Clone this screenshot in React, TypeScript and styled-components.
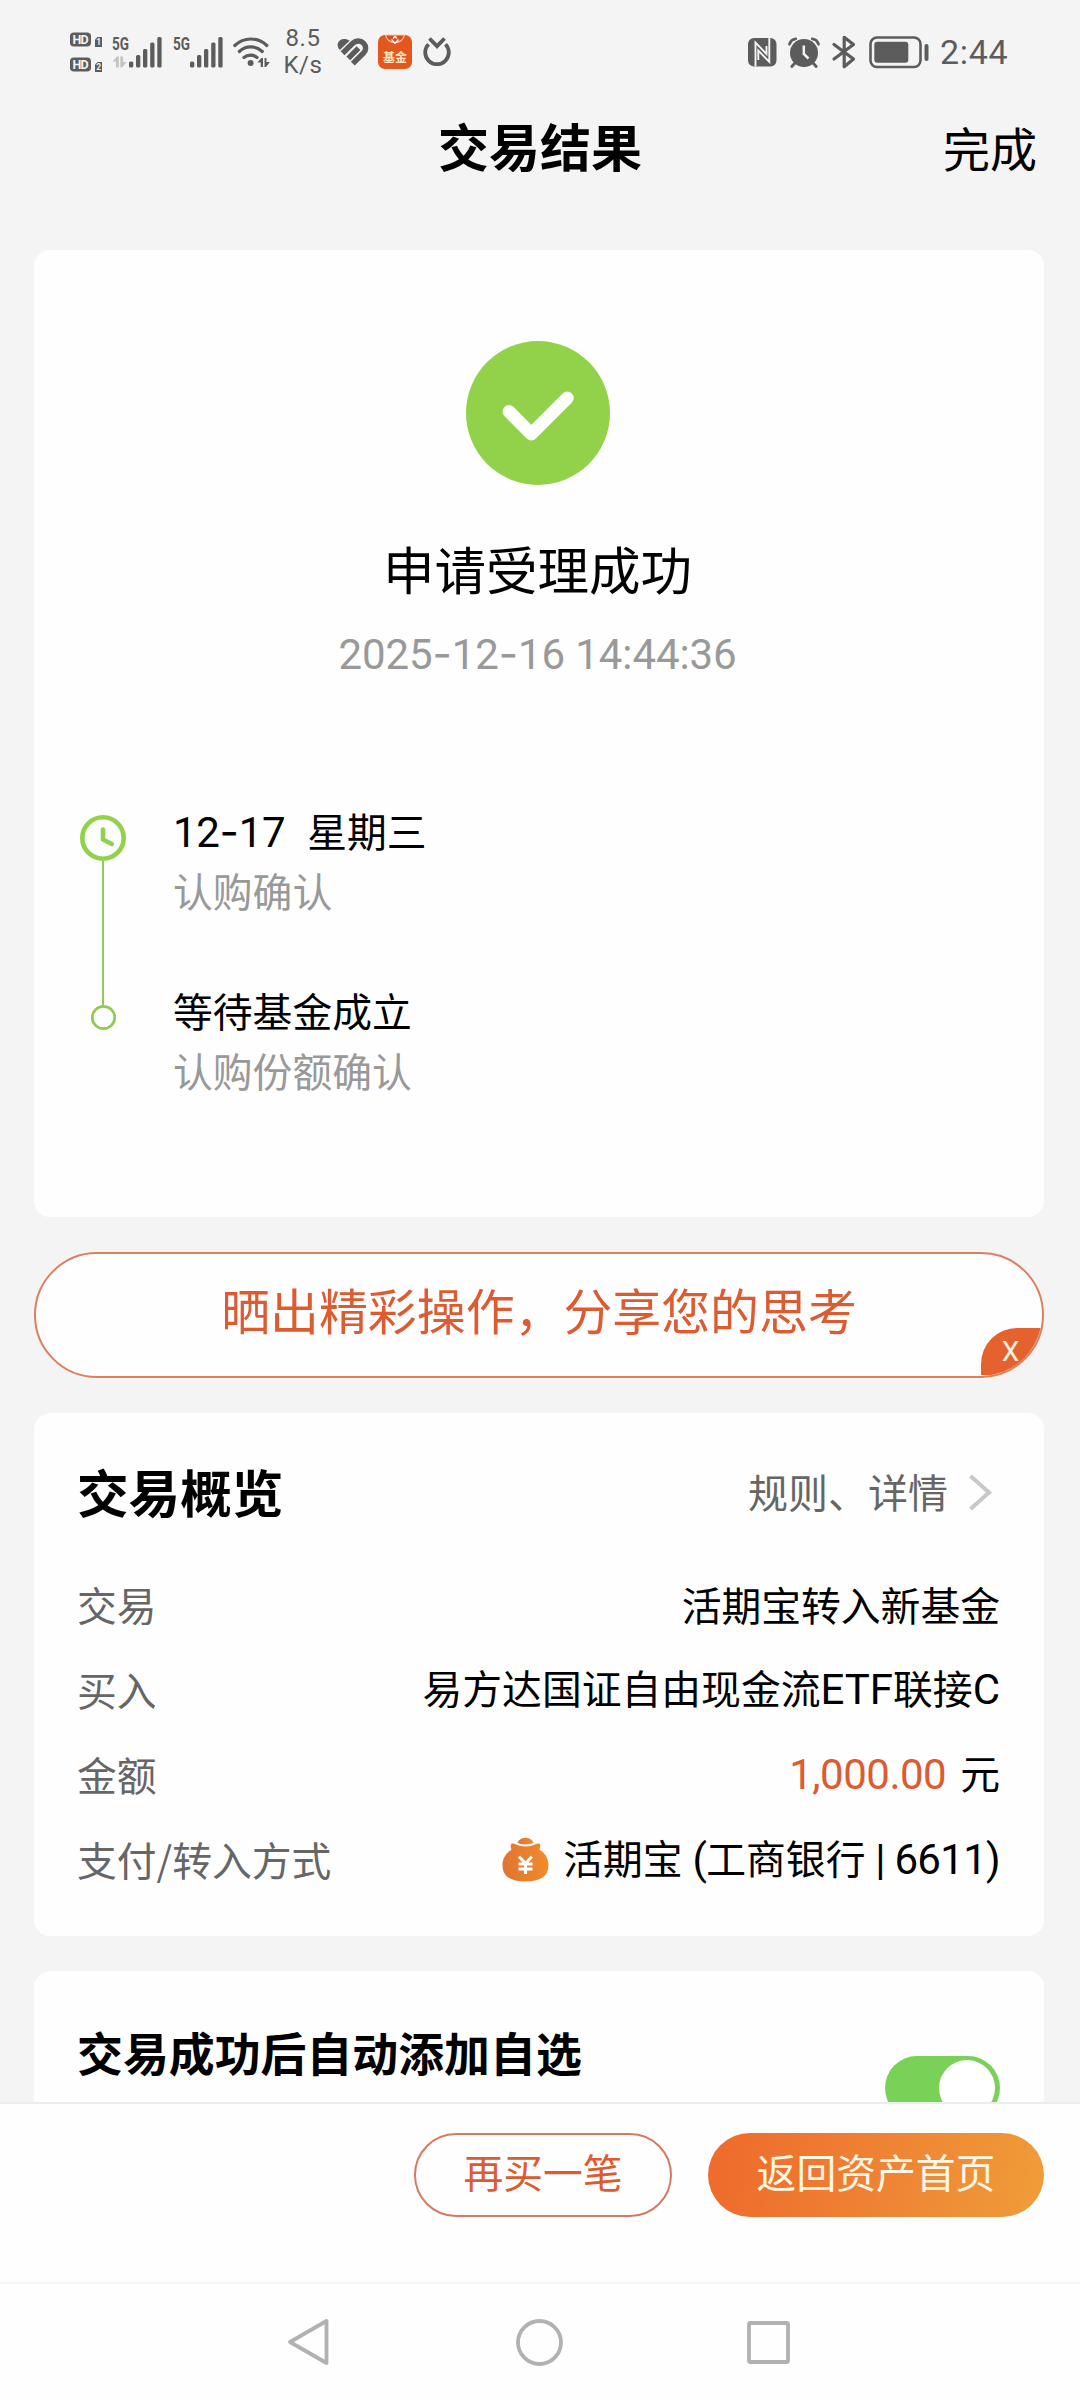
import React from "react";
import styled, { createGlobalStyle } from "styled-components";

const cjk = '"Noto Sans CJK SC", "Noto Sans", sans-serif';
const orange = "#dc5b30";
const inkGray = "#5c5c5c";

const GlobalStyle = createGlobalStyle`
  * { box-sizing: border-box; }
  html, body { margin: 0; padding: 0; background: #f4f4f4; }
  svg { display: block; flex: none; overflow: visible; }
`;

const Screen = styled.div`
  width: 1080px;
  height: 2400px;
  display: flex;
  flex-direction: column;
  overflow: hidden;
  background: #f4f4f4;
  color: #000;
  font-family: ${cjk};
`;

const StatusBar = styled.div`
  height: 104px;
  flex: none;
  display: flex;
  align-items: center;
  justify-content: space-between;
  padding: 0 71px 0 70px;
  color: ${inkGray};
`;

const StatusGroup = styled.div`
  display: flex;
  align-items: center;
`;

const StatusItem = styled.div<{ $before?: number }>`
  margin-left: ${(p) => p.$before ?? 0}px;
`;

const NetSpeed = styled.div`
  width: 36px;
  margin-left: 15px;
  display: flex;
  flex-direction: column;
  align-items: center;
  font: 24px/27px Roboto, sans-serif;
  letter-spacing: 0.6px;
`;

const Clock = styled.div`
  width: 69px;
  margin-left: 10px;
  font: 34px/40px Roboto, sans-serif;
  letter-spacing: 0.7px;
`;

const Header = styled.header`
  height: 92px;
  flex: none;
  display: grid;
  grid-template-columns: 1fr auto 1fr;
  align-items: center;
  padding: 0 43px;
`;

const PageTitle = styled.h1`
  grid-column: 2;
  margin: 0;
  font-size: 51px;
  font-weight: 700;
  line-height: 60px;
  padding-bottom: 10px;
`;

const DoneButton = styled.button`
  justify-self: end;
  padding: 0 0 6px;
  border: 0;
  background: none;
  color: #000;
  font: 47px/60px ${cjk};
`;

const Content = styled.main`
  flex: 1;
  min-height: 0;
  overflow: hidden;
  display: flex;
  flex-direction: column;
  padding: 54px 36px 0 34px;
`;

const Card = styled.section<{ $height: number; $top?: number }>`
  flex: none;
  height: ${(p) => p.$height}px;
  margin-top: ${(p) => p.$top ?? 0}px;
  background: #fefefe;
  border-radius: 16px;
`;

const ResultHead = styled.div`
  display: flex;
  flex-direction: column;
  align-items: center;
  padding-top: 91px;
  padding-right: 3px;
`;

const ResultTitle = styled.div`
  margin-top: 50px;
  font-size: 51.5px;
  line-height: 66px;
`;

const ResultTime = styled.div`
  margin-top: 28px;
  color: #999;
  font: 42px/50px Roboto, sans-serif;
  letter-spacing: -0.1px;
  white-space: pre;
`;

const Dash = styled.span`
  font-family: Inter, sans-serif;
`;

const Latin = styled.span<{ $size?: number; $spacing?: number }>`
  font-family: Roboto, sans-serif;
  font-size: ${(p) => p.$size ?? 42}px;
  letter-spacing: ${(p) => p.$spacing ?? 0}px;
`;

const Timeline = styled.div`
  display: flex;
  padding: 120px 0 0 45px;
`;

const Rail = styled.div`
  width: 48px;
  display: flex;
  flex-direction: column;
  align-items: center;
  padding-top: 15px;
`;

const RailLine = styled.div`
  width: 2px;
  height: 144px;
  background: #93c860;
`;

const Steps = styled.div`
  display: flex;
  flex-direction: column;
  gap: 60px;
  margin-left: 46px;
`;

const Step = styled.div`
  font-size: 39.8px;
  line-height: 60px;
`;

const StepDate = styled.div`
  height: 60px;
  white-space: pre;
`;

const Weekday = styled.span`
  margin-left: 22px;
`;

const StepNote = styled.div`
  color: #999;
`;

const SharePill = styled.div`
  position: relative;
  flex: none;
  height: 126px;
  margin-top: 35.5px;
  border: 2px solid #db7f5d;
  border-radius: 63px;
  background: #fefefe;
  overflow: hidden;
  display: flex;
  justify-content: center;
  align-items: center;
  padding-bottom: 12px;
  color: ${orange};
  font-size: 48.9px;
  line-height: 60px;
`;

const CloseCorner = styled.button`
  position: absolute;
  right: 0;
  bottom: 1px;
  width: 61px;
  height: 47px;
  border: 0;
  border-radius: 36px 0 0 0;
  background: #e5622e;
  color: #fff3e6;
  padding: 0 2px 0 0;
  font: 28px/46px Roboto, sans-serif;
`;

const OverviewHead = styled.div`
  display: flex;
  justify-content: space-between;
  align-items: center;
  height: 64px;
  margin-top: 46px;
  margin-bottom: 1px;
  padding: 0 51px 0 43px;
`;

const SectionTitle = styled.h2<{ $size: number }>`
  margin: 0;
  font-size: ${(p) => p.$size}px;
  font-weight: 700;
  line-height: 60px;
`;

const DetailLink = styled.div`
  display: flex;
  align-items: center;
  gap: 20px;
  padding-top: 1px;
  color: #666;
  font-size: 40px;
  line-height: 60px;
`;

const Rows = styled.div`
  display: flex;
  flex-direction: column;
  padding: 37px 44px 0 43px;
`;

const Row = styled.div`
  display: flex;
  justify-content: space-between;
  height: 85px;
  font-size: 39.8px;
  line-height: 85px;
  white-space: pre;
`;

const RowLabel = styled.div`
  color: #666;
`;

const RowValue = styled.div`
  display: flex;
  align-items: center;
`;

const Amount = styled(Latin)`
  color: ${orange};
  margin-right: 14px;
`;

const BagSlot = styled.span`
  margin: 3px 14px 0 0;
`;

const WatchRow = styled.div`
  display: flex;
  justify-content: space-between;
  align-items: flex-start;
  padding: 50px 44px 0 43px;
`;

const Toggle = styled.div`
  width: 115px;
  height: 64px;
  margin-top: 35px;
  padding: 4px 5px;
  border-radius: 32px;
  background: #79d257;
  display: flex;
  justify-content: flex-end;
`;

const Knob = styled.div`
  width: 56px;
  height: 56px;
  border-radius: 50%;
  background: #fff;
`;

const ActionBar = styled.footer`
  flex: none;
  height: 180px;
  border-top: 2px solid #ececec;
  background: #fefefe;
  display: flex;
  justify-content: flex-end;
  align-items: flex-start;
  gap: 36px;
  padding: 29px 36px 0 0;
`;

const Action = styled.button<{ $primary?: boolean }>`
  width: ${(p) => (p.$primary ? 336 : 258)}px;
  height: 84px;
  padding: 0 0 9px;
  border: ${(p) => (p.$primary ? "0" : "2px solid #d67a5d")};
  border-radius: 42px;
  background: ${(p) =>
    p.$primary ? "linear-gradient(100deg, #ee6c2c 5%, #ee8535 55%, #f09a38 95%)" : "#fefefe"};
  color: ${(p) => (p.$primary ? "#fff6e4" : orange)};
  font: 39.8px/60px ${cjk};
`;

const NavBar = styled.nav`
  flex: none;
  height: 118px;
  border-top: 2px solid #f5f5f5;
  background: #fefefe;
  display: flex;
  align-items: center;
  padding-left: 286px;
`;

const NavKey = styled.div<{ $before?: number }>`
  margin-left: ${(p) => p.$before ?? 0}px;
`;

const HdIcon = () => (
  <svg width="33" height="40" viewBox="0 0 33 40" fill={inkGray}>
    {[0, 25].map((y, i) => (
      <g key={y} transform={`translate(0 ${y})`}>
        <rect x="0" y="0.5" width="21" height="14" rx="4" />
        <text x="10.5" y="12" fontSize="12.5" fontWeight="700" fontFamily="Roboto" fill="#f4f4f4" textAnchor="middle" textLength="16">
          HD
        </text>
        <path d="M27.500 5H32v10h-7V7.500z" />
        <text x="28.600" y="13.300" fontSize="8.500" fontWeight="700" fontFamily="Roboto" fill="#f4f4f4" textAnchor="middle">
          {i + 1}
        </text>
      </g>
    ))}
  </svg>
);

const SignalIcon = ({ data }: { data?: boolean }) => (
  <svg width="50" height="32" viewBox="0 0 50 32" fill={inkGray}>
    <text x="0" y="14" fontSize="18" fontWeight="700" fontFamily="Roboto" textLength="17" lengthAdjust="spacingAndGlyphs">
      5G
    </text>
    {data && (
      <path fill="#c4c4c4" d="M0.500 25.500l4.500-5h1.800v11h-2.800v-6zM8.300 20.500h2.800v5.500h3.500l-4.500 5.500H8.300z" />
    )}
    <rect x="17" y="25.500" width="4.300" height="6" rx="1.500" />
    <rect x="24" y="19" width="4.300" height="12.500" rx="1.500" />
    <rect x="31" y="13" width="4.300" height="18.500" rx="1.500" />
    <rect x="38.200" y="6.500" width="4.300" height="25" rx="1.500" />
    <rect x="45.300" y="1" width="4.300" height="30.500" rx="1.500" />
  </svg>
);

const WifiIcon = () => (
  <svg width="37" height="32" viewBox="0 0 37 32" fill="none" stroke={inkGray} strokeWidth="3.200" strokeLinecap="round">
    <path d="M1.800 9.500a23 23 0 0 1 32 0M6.300 15.500a16.500 16.500 0 0 1 23 0M11 21.500a10 10 0 0 1 13 0" />
    <circle cx="17.600" cy="27" r="3" fill={inkGray} stroke="none" />
    <path fill={inkGray} stroke="none" d="M24.500 26.500l3.800-4.500h1.700v9h-2.300v-4.500zM31.500 22h2v4h3.500l-4 5h-1.500z" />
  </svg>
);

const HealthIcon = () => (
  <svg width="32" height="28" viewBox="0 0 32 28" fill="none" stroke={inkGray} strokeWidth="5.400">
    <path fill={inkGray} stroke="none" d="M2.800 12C-1.500 7.500.8 1.300 7 1c2.300 0 4 .6 5.600 1.700z" />
    <path d="M5.600 15.200L15.500 5.500C19 2.100 23.600 2.200 26.500 5.200c3 3.200 2.800 7.100-.2 10L15.800 25.600M11.300 20.300L21.500 10.200" />
  </svg>
);

const FundAppIcon = () => (
  <svg width="34" height="34" viewBox="0 0 34 34">
    <rect width="34" height="34" rx="7" fill="#e4571f" />
    <path d="M7.500 0a9.700 9.700 0 0 0 19 0z" fill="#d94c1f" stroke="#f6c9a4" strokeWidth="1.200" />
    <path d="M13.500 4.500l3.500 3.700 3.500-3.700M15 3.500l2-2 2 2" fill="none" stroke="#fff" strokeWidth="1.300" />
    <text x="17" y="27" fontSize="12" fontWeight="700" fontFamily="Noto Sans CJK SC" fill="#ffe9c4" textAnchor="middle">
      基金
    </text>
  </svg>
);

const TailIcon = () => (
  <svg width="28" height="30" viewBox="0 0 28 30" fill="none" stroke={inkGray} strokeWidth="3.800">
    <path d="M5.500 7.200A11.800 11.800 0 1 0 22.500 7.200" />
    <path d="M6.500 1.500L14 9.200l7.500-7.700" />
  </svg>
);

const NfcIcon = () => (
  <svg width="29" height="29" viewBox="0 0 29 29">
    <rect width="28.500" height="28.500" rx="6" fill={inkGray} />
    <path d="M7.500 28.500V4.500L18.500 16V8M21.300 0v24L10.300 12.500V22" fill="none" stroke="#f4f4f4" strokeWidth="1.900" />
  </svg>
);

const AlarmIcon = () => (
  <svg width="32" height="31" viewBox="0 0 32 31" fill="none" stroke={inkGray} strokeLinecap="round">
    <circle cx="16" cy="16" r="14" fill={inkGray} stroke="none" />
    <path d="M1.500 7.200c.8-3 3-5 6.200-5.400M30.500 7.200c-.8-3-3-5-6.200-5.400" strokeWidth="2.800" />
    <path d="M6.500 26.500l-2.700 3M25.500 26.500l2.700 3" strokeWidth="2.800" />
    <path d="M15.800 8.500v8.500l4.700 4.500" stroke="#f4f4f4" strokeWidth="2.500" strokeLinecap="butt" />
  </svg>
);

const BluetoothIcon = () => (
  <svg width="24" height="34" viewBox="0 0 24 34" fill="none" stroke={inkGray} strokeWidth="3.200" strokeLinejoin="round" strokeLinecap="round">
    <path d="M2 9.500L21.500 24l-9.300 7.700V2.300L21.500 9.500 2 24" />
  </svg>
);

const BatteryIcon = () => (
  <svg width="61" height="33" viewBox="0 0 61 33">
    <rect x="1.500" y="1.500" width="50" height="29.500" rx="6.500" fill="none" stroke={inkGray} strokeWidth="2.600" />
    <rect x="5.300" y="5.700" width="34" height="21" rx="3" fill={inkGray} />
    <rect x="55.500" y="8" width="4" height="17" rx="2" fill={inkGray} />
  </svg>
);

const SuccessIcon = () => (
  <svg width="144" height="144" viewBox="0 0 144 144">
    <circle cx="72" cy="72" r="72" fill="#92d24a" />
    <path d="M43 70.500l22.300 22.500 36-36" fill="none" stroke="#fefefe" strokeWidth="13" strokeLinecap="round" strokeLinejoin="round" />
  </svg>
);

const ClockIcon = () => (
  <svg width="46" height="46" viewBox="0 0 46 46" fill="none" stroke="#92d24a" strokeWidth="4.600">
    <circle cx="23" cy="23" r="20.700" />
    <path d="M23 14.500v10l8.800 4.500" strokeLinecap="round" strokeLinejoin="round" />
  </svg>
);

const DotIcon = () => (
  <svg width="25" height="25" viewBox="0 0 25 25">
    <circle cx="12.500" cy="12.500" r="11.200" fill="none" stroke="#8ecb4e" strokeWidth="2.700" />
  </svg>
);

const ChevronIcon = () => (
  <svg width="25" height="38" viewBox="0 0 25 38">
    <path d="M2.500 4l18.500 16.500-18.500 16.500" fill="none" stroke="#c8c8c8" strokeWidth="4" />
  </svg>
);

const BagIcon = () => (
  <svg width="47" height="46" viewBox="0 0 47 46">
    <defs>
      <linearGradient id="bag" x1="0" x2="1">
        <stop offset="0" stopColor="#e07433" />
        <stop offset="1" stopColor="#f08c2a" />
      </linearGradient>
    </defs>
    <path d="M15.500 5.800C17 2.300 20 .8 23.500.8S30 2.300 31.500 5.800c-4 2.300-12 2.300-16 0z" fill="url(#bag)" />
    <path
      d="M9.500 6.800c1.500-.6 3 0 4.500.7 6 2.500 13 2.500 19 0 1.500-.7 3-1.300 4.500-.7 1.500 1.500.7 4 0 6C43 16 46.500 21.500 46.500 28c0 11.500-8 16.500-23 16.500S.500 39.500.500 28C.500 21.500 4 16 9.500 12.800c-.7-2-1.500-4.500 0-6z"
      fill="url(#bag)"
    />
    <path d="M17 19.500l6.500 7 6.500-7M16.500 27h14M16.500 32h14M23.500 26.500v10.500" fill="none" stroke="#fff" strokeWidth="3" />
  </svg>
);

const BackIcon = () => (
  <svg width="43" height="48" viewBox="0 0 43 48">
    <path d="M40.500 3v42L4 24z" fill="none" stroke="#b1b1b1" strokeWidth="3.800" strokeLinejoin="round" />
  </svg>
);

const HomeIcon = () => (
  <svg width="47" height="47" viewBox="0 0 47 47">
    <circle cx="23.500" cy="23.500" r="21.500" fill="none" stroke="#b1b1b1" strokeWidth="3.800" />
  </svg>
);

const RecentIcon = () => (
  <svg width="43" height="43" viewBox="0 0 43 43">
    <rect x="2" y="2" width="39" height="39" rx="1.500" fill="none" stroke="#b1b1b1" strokeWidth="3.800" />
  </svg>
);

export default function App() {
  return (
    <>
      <GlobalStyle />
      <Screen>
        <StatusBar>
          <StatusGroup>
            <StatusItem><HdIcon /></StatusItem>
            <StatusItem $before={9}><SignalIcon data /></StatusItem>
            <StatusItem $before={11}><SignalIcon /></StatusItem>
            <StatusItem $before={10}><WifiIcon /></StatusItem>
            <NetSpeed>
              <span>8.5</span>
              <span>K/s</span>
            </NetSpeed>
            <StatusItem $before={16}><HealthIcon /></StatusItem>
            <StatusItem $before={9}><FundAppIcon /></StatusItem>
            <StatusItem $before={11}><TailIcon /></StatusItem>
          </StatusGroup>
          <StatusGroup>
            <StatusItem><NfcIcon /></StatusItem>
            <StatusItem $before={11}><AlarmIcon /></StatusItem>
            <StatusItem $before={12}><BluetoothIcon /></StatusItem>
            <StatusItem $before={13}><BatteryIcon /></StatusItem>
            <Clock>2:44</Clock>
          </StatusGroup>
        </StatusBar>

        <Header>
          <PageTitle>交易结果</PageTitle>
          <DoneButton>完成</DoneButton>
        </Header>

        <Content>
          <Card $height={966.5}>
            <ResultHead>
              <SuccessIcon />
              <ResultTitle>申请受理成功</ResultTitle>
              <ResultTime>
                2025<Dash>-</Dash>12<Dash>-</Dash>16 14:44:36
              </ResultTime>
            </ResultHead>
            <Timeline>
              <Rail>
                <ClockIcon />
                <RailLine />
                <DotIcon />
              </Rail>
              <Steps>
                <Step>
                  <StepDate>
                    <Latin $spacing={-0.3}>12<Dash>-</Dash>17</Latin>
                    <Weekday>星期三</Weekday>
                  </StepDate>
                  <StepNote>认购确认</StepNote>
                </Step>
                <Step>
                  <div>等待基金成立</div>
                  <StepNote>认购份额确认</StepNote>
                </Step>
              </Steps>
            </Timeline>
          </Card>

          <SharePill>
            晒出精彩操作，分享您的思考
            <CloseCorner>X</CloseCorner>
          </SharePill>

          <Card $height={523.5} $top={34.5}>
            <OverviewHead>
              <SectionTitle $size={51.6}>交易概览</SectionTitle>
              <DetailLink>
                规则、详情
                <ChevronIcon />
              </DetailLink>
            </OverviewHead>
            <Rows>
              <Row>
                <RowLabel>交易</RowLabel>
                <RowValue>活期宝转入新基金</RowValue>
              </Row>
              <Row>
                <RowLabel>买入</RowLabel>
                <RowValue>
                  <span>
                    易方达国证自由现金流<Latin>ETF</Latin>联接<Latin>C</Latin>
                  </span>
                </RowValue>
              </Row>
              <Row>
                <RowLabel>金额</RowLabel>
                <RowValue>
                  <span>
                    <Amount $spacing={-0.5}>1,000.00</Amount>元
                  </span>
                </RowValue>
              </Row>
              <Row>
                <RowLabel>支付/转入方式</RowLabel>
                <RowValue>
                  <BagSlot><BagIcon /></BagSlot>
                  <span>
                    活期宝<Latin $spacing={-0.6}> (</Latin>工商银行<Latin $spacing={-0.7}> | 6611)</Latin>
                  </span>
                </RowValue>
              </Row>
            </Rows>
          </Card>

          <Card $height={200} $top={35}>
            <WatchRow>
              <SectionTitle $size={45.9}>交易成功后自动添加自选</SectionTitle>
              <Toggle><Knob /></Toggle>
            </WatchRow>
          </Card>
        </Content>

        <ActionBar>
          <Action>再买一笔</Action>
          <Action $primary>返回资产首页</Action>
        </ActionBar>
        <NavBar>
          <NavKey><BackIcon /></NavKey>
          <NavKey $before={187}><HomeIcon /></NavKey>
          <NavKey $before={184}><RecentIcon /></NavKey>
        </NavBar>
      </Screen>
    </>
  );
}
